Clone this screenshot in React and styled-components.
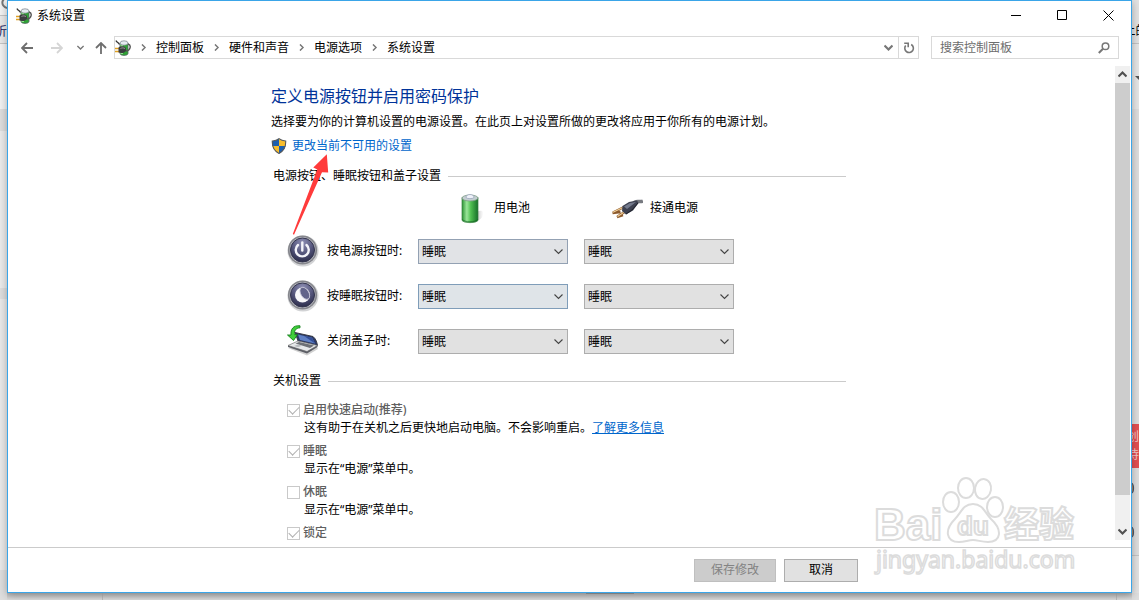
import React, { useState } from 'react'
import styled, { createGlobalStyle } from 'styled-components'

const GlobalStyle = createGlobalStyle`
  * {
    box-sizing: border-box;
  }
  body {
    margin: 0;
    font-family: "Noto Sans", "Noto Sans CJK SC", sans-serif;
    font-size: 12px;
    line-height: 18px;
    color: #000;
  }
  button, input, select {
    font: inherit;
    color: inherit;
  }
`

const actions = ['不采取任何操作', '睡眠', '休眠', '关机']

const buttonRows = [
  { id: 'power', label: '按电源按钮时:', Icon: PowerIcon, tone: 'blue' },
  { id: 'sleep', label: '按睡眠按钮时:', Icon: SleepIcon, tone: 'focus' },
  { id: 'lid', label: '关闭盖子时:', Icon: LidIcon, tone: 'plain' },
]

const shutdownOptions = [
  {
    id: 'fast',
    label: '启用快速启动(推荐)',
    text: '这有助于在关机之后更快地启动电脑。不会影响重启。',
    link: '了解更多信息',
    checked: true,
  },
  { id: 'opt-sleep', label: '睡眠', text: '显示在“电源”菜单中。', checked: true },
  { id: 'opt-hibernate', label: '休眠', text: '显示在“电源”菜单中。', checked: false },
  { id: 'opt-lock', label: '锁定', checked: true },
]

const crumbs = ['控制面板', '硬件和声音', '电源选项', '系统设置']

export default function App() {
  const [values, setValues] = useState({})

  const handleChange = (e) => setValues({ ...values, [e.target.name]: e.target.value })

  return (
    <Desktop>
      <GlobalStyle />
      <LeftEdge>
        <EdgePart $h={16} $bg='#f3f3f3' $line>
          <svg width='7' height='10' viewBox='0 0 7 10' fill='none' stroke='#777' strokeWidth='2'>
            <path d='M6 -2C1 0 1 6 7 8' />
          </svg>
        </EdgePart>
        <EdgePart $h={28} $bg='#e9e9e9' $line $color='#14145c' $justify='flex-end' $top={7}>折</EdgePart>
        <EdgePart $h={65} $bg='#f2f2f2' />
        <EdgePart $h={22} $bg='#dedede' />
        <EdgePart $h={157} $bg='#ebebeb' />
        <EdgePart $h={11} $bg='#dedede' />
        <EdgePart $h={271} $bg='#e9e9e9' />
      </LeftEdge>

      <Window>
        <TitleBar>
          <BatteryPlug />
          <span>系统设置</span>
          <Captions>
            <CaptionButton aria-label='最小化'>
              <svg width='11' height='11' viewBox='0 0 11 11'><path d='M0 5.500h10' stroke='#000' /></svg>
            </CaptionButton>
            <CaptionButton aria-label='最大化'>
              <svg width='11' height='11' viewBox='0 0 11 11'><path d='M.5 .5h9v9h-9z' fill='none' stroke='#000' /></svg>
            </CaptionButton>
            <CaptionButton aria-label='关闭'>
              <svg width='11' height='11' viewBox='0 0 11 11'><path d='M.5 .5l10 10M10.500 .5l-10 10' stroke='#000' /></svg>
            </CaptionButton>
          </Captions>
        </TitleBar>

        <NavBar>
          <NavButtons>
            <NavButton $w={30} aria-label='返回'>
              <ArrowIcon color='#6e6e6e' />
            </NavButton>
            <NavButton $w={30} aria-label='前进'>
              <ArrowIcon color='#d5d5d5' turn={180} />
            </NavButton>
            <NavButton $w={16} aria-label='最近的位置'>
              <Chevron size={7} color='#777' />
            </NavButton>
            <NavButton $w={26} aria-label='向上'>
              <ArrowIcon color='#6e6e6e' turn={90} />
            </NavButton>
          </NavButtons>
          <Address>
            <BatteryPlug />
            {crumbs.map((c) => (
              <React.Fragment key={c}>
                <CrumbGap><Chevron size={7} color='#777' turn={-90} /></CrumbGap>
                <Crumb href='#'>{c}</Crumb>
              </React.Fragment>
            ))}
            <AddressEnd>
              <AddressButton aria-label='以前的位置'>
                <Chevron size={9} color='#777' bold />
              </AddressButton>
              <AddressButton $divided aria-label='刷新'>
                <svg width='12' height='12' viewBox='0 0 12 12' fill='none' stroke='#777' strokeWidth='1.600'>
                  <path d='M8.200 2.500A4.300 4.300 0 1 1 2.700 3.600' />
                  <path d='M1.200 1.200H5.200V5.200' />
                </svg>
              </AddressButton>
            </AddressEnd>
          </Address>
          <Search>
            <input type='text' placeholder='搜索控制面板' aria-label='搜索控制面板' />
            <svg width='12' height='12' viewBox='0 0 12 12' fill='none' stroke='#777'>
              <circle cx='7.500' cy='4.200' r='3.300' strokeWidth='1.500' />
              <path d='M5 6.800L.8 11' strokeWidth='2' />
            </svg>
          </Search>
        </NavBar>

        <Body>
          <Page>
            <Content>
              <Title>定义电源按钮并启用密码保护</Title>
              <Intro>选择要为你的计算机设置的电源设置。在此页上对设置所做的更改将应用于你所有的电源计划。</Intro>
              <AdminLine>
                <ShieldIcon />
                <Link href='#'>更改当前不可用的设置</Link>
              </AdminLine>

              <GroupHead $gap={12}>电源按钮、睡眠按钮和盖子设置</GroupHead>
              <ColumnHeads>
                <ColumnHead $indent={37}><BatteryIcon />用电池</ColumnHead>
                <ColumnHead $indent={27}><PlugIcon />接通电源</ColumnHead>
              </ColumnHeads>
              <Rows>
                {buttonRows.map(({ id, label, Icon, tone }) => (
                  <Row key={id}>
                    <Icon />
                    <label htmlFor={`${id}-dc`}>{label}</label>
                    {['dc', 'ac'].map((mode) => (
                      <SelectBox key={mode}>
                        <Select
                          id={`${id}-${mode}`}
                          name={`${id}-${mode}`}
                          aria-label={mode === 'ac' ? `${label} 接通电源` : undefined}
                          $tone={mode === 'dc' ? tone : 'plain'}
                          value={values[`${id}-${mode}`] || '睡眠'}
                          onChange={handleChange}
                        >
                          {actions.map((a) => <option key={a}>{a}</option>)}
                        </Select>
                        <Chevron size={9} color='#444' thin />
                      </SelectBox>
                    ))}
                  </Row>
                ))}
              </Rows>

              <GroupHead $gap={15}>关机设置</GroupHead>
              <Options>
                {shutdownOptions.map((o) => (
                  <div key={o.id}>
                    <OptionLabel>
                      <Check type='checkbox' defaultChecked={o.checked} disabled />
                      {o.label}
                    </OptionLabel>
                    {o.text && (
                      <OptionText>
                        {o.text}
                        {o.link && <Link href='#' $underline>{o.link}</Link>}
                      </OptionText>
                    )}
                  </div>
                ))}
              </Options>

              <Pointer width='37' height='82' viewBox='0 0 37 82' aria-hidden='true'>
                <path d='M34.800 .3L21.300 13.400L25.300 15.400L.8 80L2 80.700L30 18.200L36.200 18.600Z' fill='#ff3b3b' />
              </Pointer>
            </Content>
          </Page>
          <ScrollBar>
            <ScrollButton aria-label='向上滚动'><Chevron size={9} color='#505050' turn={180} bold /></ScrollButton>
            <Thumb />
            <ScrollButton $push aria-label='向下滚动'><Chevron size={9} color='#505050' bold /></ScrollButton>
          </ScrollBar>
        </Body>

        <Footer>
          <Button $w={82} disabled>保存修改</Button>
          <Button $w={74}>取消</Button>
        </Footer>
        <Watermark />
      </Window>

      <RightEdge>
        <EdgePart $h={44} $bg='#e2e2e2' $line $justify='center' $top={22}>上的</EdgePart>
        <EdgePart $h={65} $bg='#e6e6e6' $top={32} $justify='flex-end'>
          <svg width='4' height='4' viewBox='0 0 4 4'><path d='M0 0h8l-4 4z' fill='#555' /></svg>
        </EdgePart>
        <EdgePart $h={315} $bg='#dedede' />
        <EdgePart $h={44} $bg='#e35052' $color='#f6c9c9' $justify='flex-end' $top={4} $wrap>创待</EdgePart>
        <EdgePart $h={88} $bg='#dedede' $line>
          <svg width='7' height='80' viewBox='0 0 7 80' fill='#c08a5c' stroke='#4c5a6e' strokeWidth='1.200'>
            <ellipse cx='-1' cy='20' rx='2.500' ry='5' />
            <ellipse cx='-1' cy='64' rx='2.500' ry='5' />
          </svg>
        </EdgePart>
        <EdgePart $h={37} $bg='#e2e2e2' />
      </RightEdge>
      <BottomEdge><BottomLeft /><BottomMain /></BottomEdge>
    </Desktop>
  )
}

function Chevron({ size, color, turn = 0, thin, bold }) {
  return (
    <svg width={size} height={size} viewBox='0 0 9 9' fill='none' stroke={color}
      strokeWidth={thin ? 1.1 : bold ? 2.2 : 1.8}>
      <path d='M.5 2.500L4.500 6.500L8.500 2.500' transform={`rotate(${turn} 4.5 4.5)`} />
    </svg>
  )
}

function ArrowIcon({ color, turn = 0 }) {
  return (
    <svg width='12' height='12' viewBox='0 0 12 12' fill='none' stroke={color} strokeWidth='1.800'>
      <path d='M12 6H1.200M6 1L1 6l5 5' transform={`rotate(${turn} 6 6)`} />
    </svg>
  )
}

function BatteryPlug() {
  return (
    <svg width='16' height='16' viewBox='0 0 16 16'>
      <path d='M5 3.500C5 1.500 13 1.500 13 3.500V13.500C13 16 5 16 5 13.500Z' fill='#2fa335' stroke='#566' strokeWidth='.8' />
      <path d='M5.500 4h2.500v10h-2.500z' fill='#8fe08a' />
      <ellipse cx='9' cy='3' rx='4' ry='2.200' fill='#e4ebf0' stroke='#78808a' strokeWidth='.7' />
      <path d='M13 4c3.500 1 2.800 6.500-2 7' fill='none' stroke='#555' strokeWidth='1.400' />
      <path d='M1 .5c.5 2 2 1.500 3.500 4' fill='none' stroke='#333' strokeWidth='1.200' />
      <path d='M0 8.500h5M0 11.500h5' stroke='#e0a020' strokeWidth='1.400' />
      <path d='M3.500 7.500c2-1.800 6-1.500 7.500 .8v2.400c-1 2.300-5 2.800-7.500 1.800z' fill='#3b3d40' />
      <path d='M5.500 8.500c1.500-.8 3-.8 4.500 0' stroke='#999' fill='none' />
    </svg>
  )
}

function ShieldIcon() {
  return (
    <svg width='16' height='16' viewBox='0 0 16 16'>
      <path d='M8 .7C10 2.500 12.500 3 14.700 3C15 9 13 13 8 15.400C3 13 1 9 1.300 3C3.500 3 6 2.500 8 .7Z' fill='#f8bd2c' />
      <path d='M8 .7V8H1.600C1.200 6.500 1.200 5 1.300 3C3.500 3 6 2.500 8 .7ZM8 8h6.400C13.500 11.500 11.500 13.700 8 15.400Z' fill='#1d5fae' />
      <path d='M8 .7C10 2.500 12.500 3 14.700 3C15 9 13 13 8 15.400C3 13 1 9 1.300 3C3.500 3 6 2.500 8 .7Z' fill='none' stroke='#55585c' strokeWidth='1.100' />
    </svg>
  )
}

function BatteryIcon() {
  return (
    <svg width='32' height='32' viewBox='0 0 32 32'>
      <defs>
        <linearGradient id='cell'>
          <stop offset='0' stopColor='#2c9434' />
          <stop offset='.3' stopColor='#9be69a' />
          <stop offset='.55' stopColor='#4fbf50' />
          <stop offset='1' stopColor='#17702a' />
        </linearGradient>
        <linearGradient id='cellShadow'>
          <stop offset='0' stopColor='#777' stopOpacity='.7' />
          <stop offset='1' stopColor='#999' stopOpacity='0' />
        </linearGradient>
      </defs>
      <path d='M20 21c5-4 10-2 8 2c-1 4-5 6-10 7z' fill='url(#cellShadow)' />
      <path d='M7 5.500V28C7 31.500 23 31.500 23 28V5.500Z' fill='url(#cell)' stroke='#3a7f42' strokeWidth='.7' />
      <path d='M7.500 27.500c2 3 13 3 15 0' fill='none' stroke='#0c5a1c' opacity='.6' />
      <ellipse cx='15' cy='6' rx='8' ry='3' fill='#c3ced0' stroke='#7d9a88' strokeWidth='.8' />
      <path d='M11 5.500c0-4 8-4 8 0c-1 1.500-7 1.500-8 0z' fill='#eef1f8' stroke='#949db8' strokeWidth='.7' />
    </svg>
  )
}

function PlugIcon() {
  return (
    <svg width='32' height='32' viewBox='0 0 32 32'>
      <path d='M22 12C25 7 28 11 32 9' fill='none' stroke='#777a80' strokeWidth='3.500' />
      <path d='M2 20.500L13 15M1.500 21l8-1M6 25L15 19M6 25l6-2' stroke='#8c5a2c' strokeWidth='2.400' />
      <path d='M2 20.300L12 15.500M6.500 24.500L14 19.500' stroke='#f0cf98' strokeWidth='1.200' />
      <path d='M11.500 14L18 10L26 8.500L27.500 11L22 18.500L15 22.500L11 19Z' fill='#3d4150' />
      <path d='M13 14.500L19 11L25 10L16 17Z' fill='#747a8c' />
      <path d='M15 22L21 18L27 11' stroke='#20222b' fill='none' />
    </svg>
  )
}

function RoundBase({ id, children }) {
  return (
    <svg width='32' height='32' viewBox='0 0 32 32'>
      <defs>
        <radialGradient id={id} cx='.5' cy='.2' r='.8'>
          <stop offset='0' stopColor='#8e8fb4' />
          <stop offset='.55' stopColor='#55567c' />
          <stop offset='1' stopColor='#2c2d4b' />
        </radialGradient>
      </defs>
      <circle cx='16' cy='16' r='15.500' fill='#d2d3d5' />
      <circle cx='15.500' cy='15' r='14.600' fill='#85868c' />
      <circle cx='15.500' cy='15' r='13' fill='#bcbdc4' />
      <circle cx='15.500' cy='15' r='12' fill={`url(#${id})`} stroke='#34354d' />
      {children}
    </svg>
  )
}

function PowerIcon() {
  return (
    <RoundBase id='powerBase'>
      <path d='M11 10A6.500 6.500 0 1 0 19.500 10' fill='none' stroke='#f4f4fa' strokeWidth='2.400' strokeLinecap='round' />
      <path d='M15.300 7.500v8' stroke='#f4f4fa' strokeWidth='2.400' strokeLinecap='round' />
    </RoundBase>
  )
}

function SleepIcon() {
  return (
    <RoundBase id='sleepBase'>
      <circle cx='15.500' cy='15' r='7.500' fill='#f7f7f9' />
      <ellipse cx='17.800' cy='13.300' rx='4' ry='6.600' transform='rotate(-32 17.8 13.3)' fill='#62648a' stroke='#c5c6d6' strokeWidth='.8' />
    </RoundBase>
  )
}

function LidIcon() {
  return (
    <svg width='32' height='32' viewBox='0 0 32 32'>
      <path d='M1 23L20 30.500L31 24L29 20Z' fill='#bcbcbc' opacity='.7' />
      <path d='M8 7.500L26 11.500C29 14 30 17.500 30.500 20.500L11 16Z' fill='#2c3a68' stroke='#30313a' strokeWidth='.9' />
      <path d='M11 9.500L25 12.700L28 18.500L13 15Z' fill='#5f80c4' />
      <path d='M17 11l8 1.700l3 5.800z' fill='#334e98' />
      <path d='M1 20.500L11 16L30.500 20.500L20 26.500Z' fill='#e6e8ea' stroke='#777' strokeWidth='.7' />
      <path d='M8.500 18.500L12 17L27 20.500L23 23Z' fill='#6d7076' />
      <path d='M7 21l4-1.500l4 1.200l-4 1.500z' fill='#b9bcc0' />
      <path d='M1 20.500L20 26.500L30.500 20.500V22L20 28.500L1 22Z' fill='#5d5f66' />
      <path d='M13 .8C6 0 3.500 4.500 4 10H.5L6.500 15.500L10.500 9.500L7.500 9.700C7 6 8.500 3 13 2.800Z' fill='#3fcf3a' stroke='#15801c' strokeWidth='.9' />
    </svg>
  )
}

// site logo printed over the bottom right corner
function Watermark() {
  return (
    <Mark width='212' height='104' viewBox='0 0 212 104' aria-hidden='true'>
      <g fill='#fff' stroke='#dcdcdc' strokeWidth='2' fontFamily='"Liberation Sans", sans-serif'>
        <text x='4' y='64' fontSize='44' fontWeight='700'>Bai</text>
        <ellipse cx='81' cy='26' rx='8' ry='10' />
        <ellipse cx='96' cy='12' rx='8' ry='10' />
        <ellipse cx='113' cy='13' rx='8' ry='10' transform='rotate(10 113 13)' />
        <ellipse cx='125' cy='31' rx='8' ry='10' />
        <path d='M103 28C113 28 115 37 121 43C133 54 131 66 118 66C111 66 108 64 103 64C98 64 95 66 89 66C76 66 74 54 85 43C91 37 93 28 103 28Z' />
        <text x='87' y='59' fontSize='26' fontWeight='700'>du</text>
        <text x='134' y='61' fontSize='35' fontWeight='700' fontFamily='"Noto Sans CJK SC", sans-serif'>经验</text>
        <text x='6' y='92' fontSize='23' fontFamily='"Noto Sans", sans-serif' strokeWidth='1.500'>jingyan.baidu.com</text>
      </g>
    </Mark>
  )
}

const Desktop = styled.div`
  display: grid;
  grid-template-columns: 7px minmax(0, 1fr) 7px;
  grid-template-rows: minmax(0, 1fr) 7px;
  height: 100vh;
  overflow: hidden;
  background: #dedede;
`

const LeftEdge = styled.div`
  grid-row: 1 / 3;
  display: flex;
  flex-direction: column;
  overflow: hidden;
`

const RightEdge = styled(LeftEdge)`
  grid-column: 3;
  grid-row: 1 / 3;
`

const EdgePart = styled.div`
  height: ${(p) => p.$h}px;
  flex-shrink: 0;
  display: flex;
  justify-content: ${(p) => p.$justify || 'flex-start'};
  align-items: flex-start;
  padding-top: ${(p) => p.$top || 0}px;
  overflow: hidden;
  white-space: ${(p) => (p.$wrap ? 'normal' : 'nowrap')};
  background: ${(p) => p.$bg};
  color: ${(p) => p.$color || '#000'};
  border-bottom: ${(p) => (p.$line ? '1px solid #c4c4c4' : 'none')};
`

const BottomEdge = styled.div`
  grid-column: 2;
  grid-row: 2;
  display: flex;
  background: linear-gradient(#bdbdbd, #dcdcdc);
`

const BottomLeft = styled.div`
  width: 96px;
  border-right: 1px solid #bbb;
`

const BottomMain = styled.div`
  flex: 1;
  display: flex;
  justify-content: center;
  margin-right: 15px;
  border-right: 1px solid #bbb;
  &::before {
    content: '';
    width: 48px;
    height: 1px;
    background: #9c9c9c;
  }
`

const Window = styled.div`
  grid-column: 2;
  grid-row: 1;
  position: relative;
  display: flex;
  flex-direction: column;
  background: #fff;
  border: 1px solid #3aa5e8;
  box-shadow: 0 2px 8px rgba(0, 0, 0, 0.3);
`

const TitleBar = styled.div`
  height: 30px;
  display: flex;
  align-items: center;
  gap: 5px;
  padding-left: 8px;
`

const Captions = styled.div`
  align-self: flex-start;
  margin-left: auto;
  display: flex;
`

const CaptionButton = styled.button`
  width: 46px;
  height: 28px;
  padding: 0;
  border: none;
  background: none;
  display: flex;
  align-items: center;
  justify-content: center;
`

const NavBar = styled.div`
  height: 33px;
  margin-bottom: 2px;
  display: flex;
  align-items: center;
  gap: 12px;
  padding: 0 12px 0 4px;
`

const NavButtons = styled.div`
  display: flex;
  margin-right: -12px;
`

const NavButton = styled.button`
  width: ${(p) => p.$w}px;
  height: 23px;
  padding: 0;
  border: none;
  background: none;
  display: flex;
  align-items: center;
  justify-content: center;
`

const Address = styled.nav`
  flex: 1;
  min-width: 0;
  height: 23px;
  display: flex;
  align-items: center;
  border: 1px solid #d9d9d9;
`

const CrumbGap = styled.span`
  width: 25px;
  display: flex;
  justify-content: center;
`

const Crumb = styled.a`
  color: #000;
  text-decoration: none;
  white-space: nowrap;
`

const AddressEnd = styled.div`
  margin-left: auto;
  display: flex;
`

const AddressButton = styled.button`
  width: 20px;
  height: 21px;
  padding: 0;
  border: none;
  border-left: ${(p) => (p.$divided ? '1px solid #d9d9d9' : 'none')};
  background: none;
  display: flex;
  align-items: center;
  justify-content: center;
`

const Search = styled.div`
  width: 188px;
  height: 23px;
  display: flex;
  align-items: center;
  padding: 0 8px;
  border: 1px solid #d9d9d9;
  input {
    flex: 1;
    min-width: 0;
    padding: 0;
    border: none;
    outline: none;
    background: none;
  }
  input::placeholder {
    color: #6d6d6d;
  }
`

const Body = styled.div`
  flex: 1;
  min-height: 0;
  display: flex;
  padding-right: 1px;
`

const Page = styled.main`
  flex: 1;
  min-width: 0;
  overflow: hidden;
  padding-top: 18px;
`

const Content = styled.div`
  position: relative;
  max-width: 581px;
  margin: 0 auto;
  padding-right: 6px;
`

const Title = styled.h1`
  margin: 0;
  font-size: 16px;
  line-height: 24px;
  font-weight: 400;
  color: #003399;
`

const Intro = styled.p`
  margin: 5px 0 6px;
`

const AdminLine = styled.div`
  display: flex;
  align-items: center;
  gap: 5px;
`

const Link = styled.a`
  color: #0066cc;
  text-decoration: ${(p) => (p.$underline ? 'underline' : 'none')};
`

const GroupHead = styled.h2`
  display: flex;
  align-items: center;
  gap: 7px;
  margin: ${(p) => p.$gap}px 0 0;
  padding-left: 2px;
  font-size: 12px;
  line-height: 18px;
  font-weight: 400;
  &::after {
    content: '';
    flex: 1;
    height: 1px;
    background: #cbcbcb;
  }
`

const ColumnHeads = styled.div`
  display: grid;
  grid-template-columns: 150px 150px;
  column-gap: 16px;
  margin-top: 7px;
  padding-left: 147px;
`

const ColumnHead = styled.div`
  display: flex;
  align-items: center;
  gap: 7px;
  padding-left: ${(p) => p.$indent}px;
`

const Rows = styled.div`
  display: flex;
  flex-direction: column;
  gap: 13px;
  margin-top: 11px;
  padding-left: 16px;
`

const Row = styled.div`
  height: 32px;
  display: grid;
  grid-template-columns: 40px 91px 166px 150px;
  align-items: center;
`

const SelectBox = styled.div`
  position: relative;
  width: 150px;
  svg {
    position: absolute;
    right: 5px;
    top: 8px;
    pointer-events: none;
  }
`

const tones = {
  blue: ['#e1e3e6', '#93a1b3'],
  focus: ['#dfe4e8', '#7f9db9'],
  plain: ['#e1e1e1', '#adadad'],
}

const Select = styled.select`
  display: block;
  width: 100%;
  height: 25px;
  padding: 2px 3px 0;
  appearance: none;
  border-radius: 0;
  background: ${(p) => tones[p.$tone][0]};
  border: 1px solid ${(p) => tones[p.$tone][1]};
`

const Options = styled.div`
  display: flex;
  flex-direction: column;
  gap: 5px;
  margin-top: 11px;
  padding-left: 16px;
`

const OptionLabel = styled.label`
  display: flex;
  align-items: center;
  gap: 3px;
  color: #606060;
  font-weight: 500;
`

const Check = styled.input`
  appearance: none;
  width: 13px;
  height: 13px;
  margin: 0;
  border: 1px solid #c9c9c9;
  background: #fff;
  display: grid;
  place-items: center;
  &:checked::after {
    content: '';
    width: 9px;
    height: 5px;
    margin-bottom: 3px;
    border: solid #b0b0b0;
    border-width: 0 0 1px 1px;
    transform: rotate(-45deg);
  }
`

const OptionText = styled.div`
  padding-left: 17px;
`

const Pointer = styled.svg`
  position: absolute;
  left: 21px;
  top: 70px;
  pointer-events: none;
`

const ScrollBar = styled.div`
  width: 15px;
  margin-bottom: 7px;
  display: flex;
  flex-direction: column;
  background: #f0f0f0;
`

const ScrollButton = styled.button`
  height: 17px;
  padding: 0;
  border: none;
  background: none;
  display: flex;
  align-items: center;
  justify-content: center;
  margin-top: ${(p) => (p.$push ? 'auto' : 0)};
`

const Thumb = styled.div`
  height: 87%;
  background: #cdcdcd;
`

const Footer = styled.footer`
  height: 45px;
  display: flex;
  align-items: center;
  justify-content: flex-end;
  gap: 8px;
  padding-right: 273px;
  border-top: 1px solid #cbcbcb;
`

const Button = styled.button`
  width: ${(p) => p.$w}px;
  height: 23px;
  padding: 0;
  border: 1px solid #adadad;
  background: #e1e1e1;
  &:disabled {
    border-color: #bfbfbf;
    background: #cccccc;
    color: #838383;
  }
`

const Mark = styled.svg`
  position: absolute;
  right: 49px;
  bottom: 12px;
  pointer-events: none;
`
